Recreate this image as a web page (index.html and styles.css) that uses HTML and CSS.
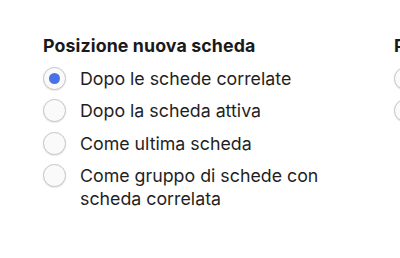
FILE: index.html
```html
<!DOCTYPE html>
<html lang="it">
<head>
<meta charset="utf-8">
<link rel="stylesheet" href="styles.css">
</head>
<body>
<div class="columns">
  <section class="group">
    <h2 class="title">Posizione nuova scheda</h2>
    <ul class="options">
      <li class="option"><span class="radio checked"></span><span class="label">Dopo le schede correlate</span></li>
      <li class="option"><span class="radio"></span><span class="label">Dopo la scheda attiva</span></li>
      <li class="option"><span class="radio"></span><span class="label">Come ultima scheda</span></li>
      <li class="option"><span class="radio"></span><span class="label">Come gruppo di schede con scheda correlata</span></li>
    </ul>
  </section>
  <section class="group">
    <h2 class="title">Posizione</h2>
    <ul class="options">
      <li class="option"><span class="radio"></span><span class="label">Opzione</span></li>
      <li class="option"><span class="radio"></span><span class="label">Opzione</span></li>
    </ul>
  </section>
</div>
</body>
</html>
```

FILE: styles.css
```css
html, body {
  margin: 0;
  padding: 0;
  background: #ffffff;
}
body {
  width: 400px;
  height: 258px;
  overflow: hidden;
  font-family: Inter, "Liberation Sans", sans-serif;
  color: #1f1f1f;
}
.columns {
  display: flex;
  gap: 51px;
  padding: 34px 0 0 43px;
}
.group {
  flex: 0 0 300px;
}
.title {
  margin: 0 0 9.5px 0;
  font-size: 17.8px;
  line-height: 23px;
  font-weight: 700;
  color: #1a1a1a;
  letter-spacing: 0.1px;
}
.options {
  list-style: none;
  margin: 0;
  padding: 0;
  display: flex;
  flex-direction: column;
  gap: 9.5px;
}
.option {
  display: flex;
  align-items: flex-start;
  gap: 14px;
  font-size: 17.8px;
  line-height: 23px;
}
.label {
  flex: 1;
  padding-right: 20px;
}
.radio {
  flex: 0 0 auto;
  box-sizing: border-box;
  width: 23px;
  height: 23px;
  border-radius: 50%;
  border: 1px solid #c8c8c8;
  background: #fafafa;
  box-shadow: 0 0.5px 1.5px rgba(0,0,0,0.14);
  display: flex;
  align-items: center;
  justify-content: center;
}
.radio.checked::after {
  content: "";
  width: 11px;
  height: 11px;
  border-radius: 50%;
  background: #4a72e8;
}
```
